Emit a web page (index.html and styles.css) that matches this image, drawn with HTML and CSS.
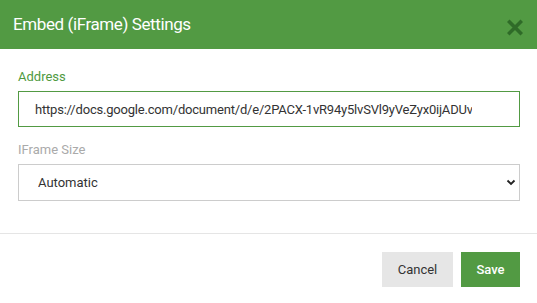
FILE: index.html
```html
<!DOCTYPE html>
<html lang="en">
<head>
    <meta charset="UTF-8">
    <title>Embed (iFrame) Settings</title>
    <link rel="stylesheet" href="styles.css">
</head>
<body>
    <div class="modal">
        <div class="modal-header">
            <h2 class="modal-title">Embed (iFrame) Settings</h2>
            <button class="close-button" aria-label="Close">
                <svg width="16" height="17" viewBox="0 0 16 17">
                    <path d="M2.5 3 L13.5 14 M13.5 3 L2.5 14" stroke="#2f6b28" stroke-width="3.6" stroke-linecap="square"/>
                </svg>
            </button>
        </div>

        <div class="modal-body">
            <div class="field">
                <label class="field-label active">Address</label>
                <input class="field-input" type="text" value="https://docs.google.com/document/d/e/2PACX-1vR94y5lvSVl9yVeZyx0ijADUvdpub?embedded=true">
            </div>

            <div class="field">
                <label class="field-label">IFrame Size</label>
                <div class="select-wrap">
                    <select class="field-select">
                        <option>Automatic</option>
                        <option>Custom</option>
                    </select>
                    <svg class="select-chevron" width="10" height="7" viewBox="0 0 10 7">
                        <path d="M1.5 1.5 L5 5 L8.5 1.5" fill="none" stroke="#222" stroke-width="1.8"/>
                    </svg>
                </div>
            </div>
        </div>

        <div class="modal-footer">
            <button class="btn btn-cancel">Cancel</button>
            <button class="btn btn-save">Save</button>
        </div>
    </div>
</body>
</html>
```

FILE: styles.css
```css
* {
    margin: 0;
    padding: 0;
    box-sizing: border-box;
}

body {
    font-family: Roboto, "Liberation Sans", sans-serif;
    background: #fff;
    color: #333;
}

.modal {
    width: 537px;
}

.modal-header {
    height: 49px;
    background: #529a43;
    display: flex;
    align-items: center;
    justify-content: space-between;
    padding: 0 14px 0 13px;
}

.modal-title {
    font-size: 17px;
    font-weight: 400;
    letter-spacing: -0.4px;
    color: #fff;
    margin-top: -2px;
}

.close-button {
    background: none;
    border: none;
    display: flex;
    margin-top: 5px;
    cursor: pointer;
}

.modal-body {
    padding: 20px 17px 32px 18px;
}

.field + .field {
    margin-top: 15px;
}

.field-label {
    display: block;
    font-size: 13px;
    line-height: 16px;
    color: #aaa;
    margin-bottom: 6px;
}

.field-label.active {
    color: #4f9a3f;
}

.field-input {
    display: block;
    width: 100%;
    height: 36px;
    border: 1px solid #529a43;
    padding: 0 47px 0 16px;
    font-family: inherit;
    font-size: 13px;
    letter-spacing: -0.2px;
    color: #333;
    outline: none;
}

.select-wrap {
    position: relative;
}

.field-select {
    display: block;
    width: 100%;
    height: 37px;
    border: 1px solid #ccc;
    border-radius: 0;
    background: #fff;
    padding: 0 19px;
    font-family: inherit;
    font-size: 13px;
    color: #333;
    appearance: none;
    -webkit-appearance: none;
}

.select-chevron {
    position: absolute;
    right: 4px;
    top: 15px;
    pointer-events: none;
}

.modal-footer {
    border-top: 1px solid #e5e5e5;
    display: flex;
    justify-content: flex-end;
    gap: 8px;
    padding: 18px 17px 0 0;
}

.btn {
    height: 35px;
    border: none;
    font-family: inherit;
    font-size: 13px;
    cursor: pointer;
}

.btn-cancel {
    width: 71px;
    background: #e6e6e6;
    color: #333;
}

.btn-save {
    width: 59px;
    background: #529a43;
    color: #fff;
    font-weight: 500;
}
```
